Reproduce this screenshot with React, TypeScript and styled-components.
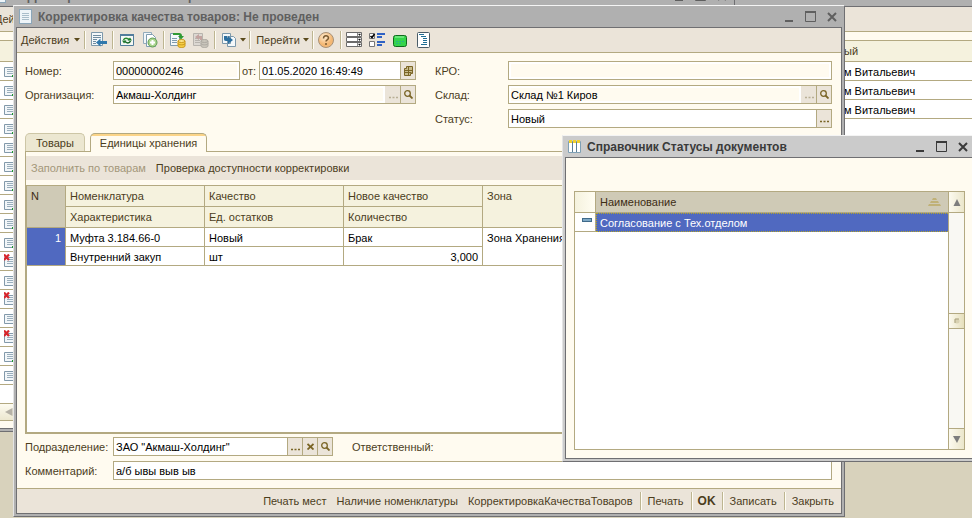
import React from 'react';
import styled, { createGlobalStyle, css } from 'styled-components';

const c = {
  desktop: '#d8d2bc',
  cream: '#fffbf0',
  bar: '#ebe4d9',
  line: '#b3a981',
  head: '#f5f2de',
  headActive: '#cfcab6',
  dark: '#6f6f72',
  text: '#4b3d1c',
  blue: '#5069c0',
  glyph: '#7a6526',
};

const GlobalStyle = createGlobalStyle`
  *, *::before, *::after { box-sizing: border-box; }
  html, body, #root { height: 100%; margin: 0; }
  body { font: 11px/14px "Liberation Sans", Arial, sans-serif; color: ${c.text}; }
  button, input { font: inherit; color: inherit; margin: 0; padding: 0; border: 0; border-radius: 0; background: none; outline: none; }
  svg { display: block; flex: none; }
`;

const Desktop = styled.div`
  position: relative;
  height: 100%;
  overflow: hidden;
  background: ${c.desktop};
`;

/* ---------- windows ---------- */

type Place = { $place: 'back' | 'main' | 'dialog' };
const places = {
  back: css`inset: -16px -13px 86px -13px; background: #b0b0b0; color: #5f5f5f;`,
  main: css`inset: 5px 127px 1px 13px; background: #b0b0b0; color: #5f5f5f;`,
  dialog: css`inset: 135px -4px 56px 562px; background: #cbcbcb; color: #3a3a3a;`,
};

const Frame = styled.section<Place>`
  position: absolute;
  display: flex;
  flex-direction: column;
  border: 1px solid ${c.dark};
  border-top-color: #f4f4f4;
  border-left-color: #e4e4e4;
  ${p => places[p.$place]}
`;

const TitleBar = styled.header`
  display: flex;
  align-items: center;
  flex: none;
  height: 21px;
  padding-left: 5px;
`;

const Title = styled.h1`
  flex: 1;
  margin: 0 0 0 6px;
  font: bold 12px/16px "Liberation Sans", Arial, sans-serif;
  white-space: nowrap;
`;

const Controls = styled.div`
  display: flex;
  padding-right: 2px;
`;

const Control = styled.button`
  display: grid;
  place-items: center;
  width: 21px;
  height: 20px;
`;

const TitleFiller = styled.div`
  width: 250px;
  height: 21px;
  border-left: 1px solid ${c.dark};
`;

const Client = styled.div`
  display: flex;
  flex: 1;
  flex-direction: column;
  min-height: 0;
  margin: 0 2px 2px;
  border: 1px solid ${c.dark};
  background: ${c.cream};
  color: ${c.text};
`;

/* ---------- toolbars ---------- */

const Toolbar = styled.div`
  display: flex;
  align-items: center;
  flex: none;
  height: 25px;
  border-bottom: 1px solid ${c.line};
  background: ${c.bar};
`;

const MenuButton = styled.button<{ $compact?: boolean }>`
  display: flex;
  align-items: center;
  gap: ${p => (p.$compact ? 2 : 4)}px;
  height: 22px;
  padding: 0 ${p => (p.$compact ? 1 : 2)}px 0 4px;
  white-space: nowrap;
`;

const ToolButton = styled.button`
  display: grid;
  place-items: center;
  width: 23px;
  height: 22px;
`;

const Separator = styled.span`
  width: 2px;
  height: 18px;
  margin: 0 1px 0 2px;
  border-left: 1px solid #bdb591;
  border-right: 1px solid #fffdf5;
`;

const FooterBar = styled(Toolbar)`
  justify-content: flex-end;
  padding-right: 2px;
  border-top: 1px solid ${c.line};
  border-bottom: 0;
`;

const CommandBar = styled.div`
  display: flex;
  flex: none;
  align-items: center;
  height: 24px;
  background: ${c.bar};
`;

const TextButton = styled.button<{ $strong?: boolean }>`
  height: 22px;
  padding: 0 ${p => (p.$strong ? 4 : 5)}px;
  white-space: nowrap;
  font-weight: ${p => (p.$strong ? 'bold' : 'normal')};
  font-size: ${p => (p.$strong ? 12 : 11)}px;
  &:disabled { color: #a3977a; }
`;

/* ---------- form ---------- */

const FormBody = styled.form`
  display: flex;
  flex: 1;
  flex-direction: column;
  min-height: 0;
  padding: 8px 9px 8px 8px;
`;

const FieldGrid = styled.div`
  display: grid;
  grid-template-columns: 391px minmax(0, 1fr);
  gap: 5px 19px;
`;

const FieldRow = styled.div<{ $side?: 'right' }>`
  display: flex;
  align-items: center;
  flex: none;
  height: 19px;
  ${p => p.$side && css`grid-column: 2;`}
`;

const Label = styled.label<{ $size: 'left' | 'right' | 'fit' }>`
  flex: none;
  width: ${p => ({ left: '88px', right: '73px', fit: 'auto' })[p.$size]};
  padding: ${p => (p.$size === 'fit' ? '0 3px 0 2px' : '0')};
`;

const FieldBox = styled.div<{ $size?: 'short' | 'medium' }>`
  display: flex;
  flex: ${p => (p.$size ? 'none' : '1')};
  width: ${p => (p.$size === 'short' ? '127px' : p.$size === 'medium' ? '220px' : 'auto')};
  min-width: 0;
  height: 19px;
  border: 1px solid ${c.line};
  background: #fff;
`;

const TextBox = styled.input`
  flex: 1;
  min-width: 0;
  height: 17px;
  padding: 0 2px;
  color: #000;
  &:read-only {
    background: ${c.cream};
    box-shadow: inset 0 0 0 2px #fff;
  }
`;

const FieldButton = styled.button<{ $flat?: boolean }>`
  display: grid;
  place-items: center;
  flex: none;
  width: 15px;
  border-left: 1px solid ${p => (p.$flat ? c.bar : c.line)};
  background: ${c.bar};
  color: ${c.glyph};
  &:disabled { color: #b9af96; }
`;

/* ---------- tabs and grid ---------- */

const Tabs = styled.div`
  display: flex;
  align-items: flex-start;
  flex: none;
  gap: 5px;
  height: 19px;
  margin-top: 5px;
  box-shadow: inset 0 -1px ${c.line};
`;

const Tab = styled.button`
  height: 18px;
  padding: 1px 10px 0;
  border: 1px solid #cdc6a6;
  border-bottom: 0;
  border-radius: 5px 5px 0 0;
  background: #ece7d1;
  &[aria-selected='true'] {
    height: 19px;
    padding: 0 9px;
    border-color: ${c.line};
    background: linear-gradient(#fbd489 0 2px, ${c.cream} 2px);
  }
`;

const Panel = styled.div`
  display: flex;
  flex: 1;
  flex-direction: column;
  gap: 5px;
  min-height: 0;
  padding-top: 4px;
  box-shadow: inset 1px 0 ${c.line}, inset -1px 0 ${c.line};
  & > ${CommandBar} { margin: 0 1px; }
`;

const GridFrame = styled.div`
  flex: 1;
  min-height: 0;
  overflow: hidden;
  border: 2px solid ${c.line};
  border-top-width: 1px;
  background: #fff;
`;

const Grid = styled.table`
  width: 100%;
  table-layout: fixed;
  border-spacing: 0;
  th, td {
    overflow: hidden;
    padding: 0 4px;
    border-right: 1px solid ${c.line};
    border-bottom: 1px solid ${c.line};
    text-align: left;
    font-weight: normal;
    white-space: nowrap;
  }
  th:last-child, td:last-child { border-right: 0; }
  th { height: 21px; background: ${c.head}; }
  td { height: 19px; padding-top: 2px; background: #fff; color: #000; }
  [rowspan] { vertical-align: top; padding-top: 3px; }
  .inner { border-right: 1px solid ${c.line}; }
`;

const Col = styled.col<{ $w?: number }>`
  width: ${p => (p.$w ? `${p.$w}px` : 'auto')};
`;

const ActiveHead = styled.th`
  && { background: ${c.headActive}; color: #3d2c14; }
`;

const RowNumber = styled.td`
  && { background: ${c.blue}; color: #fff; text-align: right; }
`;

const InnerHead = styled.th`
  &&&:last-child { border-right: 1px solid ${c.line}; }
`;

const NumberCell = styled.td`
  &&&:last-child { border-right: 1px solid ${c.line}; text-align: right; }
`;

const Bottom = styled.div`
  display: flex;
  flex: none;
  flex-direction: column;
  gap: 5px;
  margin-top: 3px;
`;

const Responsible = styled.span`
  margin-left: 19px;
`;

/* ---------- dialog list ---------- */

const ListFrame = styled.div`
  display: flex;
  flex: 1;
  min-height: 0;
  margin: 33px 7px 8px 8px;
  border: 1px solid ${c.line};
  background: #fff;
`;

const ListArea = styled.div`
  flex: 1;
  min-width: 0;
`;

const ListHead = styled.div`
  display: flex;
  align-items: center;
  justify-content: space-between;
  padding-right: 3px;
`;

const MarkerHead = styled.th`
  && { background: linear-gradient(90deg, ${c.head}, #fffdf2); }
`;

const MarkerCell = styled.td`
  && { padding: 0 0 4px 7px; }
`;

const SelectedCell = styled.td`
  && {
    padding: 0 3px;
    border: 1px dotted #b5a628;
    background: ${c.blue};
    color: #fff;
  }
`;

const ScrollBar = styled.div`
  display: flex;
  flex: none;
  flex-direction: column;
  width: 16px;
  border-left: 1px solid ${c.line};
  background: #f9f8f3;
`;

const ScrollButton = styled.button`
  display: grid;
  place-items: center;
  flex: none;
  height: 21px;
  background: linear-gradient(90deg, #fcfaef, #ebe6cb);
  &:first-child { border-bottom: 1px solid ${c.line}; }
  &:last-child { border-top: 1px solid ${c.line}; }
`;

const Track = styled.div`
  display: flex;
  flex-direction: column;
  justify-content: center;
  flex: 1;
`;

const Thumb = styled.div`
  display: grid;
  place-items: center;
  height: 16px;
  border: solid ${c.line};
  border-width: 1px 0;
  background: linear-gradient(90deg, #fcfaef, #e6dfbb);
`;

/* ---------- back window ---------- */

const Journal = styled.div`
  display: flex;
  flex: 1;
  flex-direction: column;
  min-height: 0;
  margin: 8px 0 7px;
  border: solid ${c.line};
  border-width: 1px 0;
  background: #fff;
`;

const JournalGrid = styled(Grid)`
  && td, && th { border-right: 0; padding-left: 0; }
  && td:first-child { padding: 0 0 0 13px; }
`;

const HScroll = styled.div`
  flex: none;
  height: 17px;
  margin-top: auto;
  padding: 4px 0 0 14px;
  border-top: 1px solid ${c.line};
  background: linear-gradient(#fdfbf0, #ece7cf);
`;

/* ---------- drawings ---------- */

const Arrow = () => (
  <svg width="7" height="4" viewBox="0 0 7 4"><path d="M1 0h6L4 3.500z" fill="#5a4a1c" /></svg>
);

const PageIcon = () => (
  <svg width="13" height="15" viewBox="0 0 13 15">
    <rect x=".5" y=".5" width="12" height="14" fill="#eef4f8" stroke="#8ba6b9" />
    <path d="M3 4.500h7M3 6.500h7M3 8.500h7M3 10.500h7" stroke="#a9bdca" />
  </svg>
);

const BookIcon = () => (
  <svg width="13" height="13" viewBox="0 0 13 13">
    <path d="M.5 1.500h12v11H.5z" fill="#fff" stroke="#7fa0b5" />
    <path d="M4.500 2v10M8.500 2v10" stroke="#5c7e96" />
    <path d="M1 1.500h3M5 1.500h3M9 1.500h3" stroke="#efd02e" strokeWidth="3" />
  </svg>
);

const MinIcon = () => (
  <svg width="12" height="12" viewBox="0 0 12 12"><path d="M1 10h8" stroke="currentColor" strokeWidth="2" /></svg>
);
const MaxIcon = () => (
  <svg width="12" height="12" viewBox="0 0 12 12">
    <path d="M.5.500h10v10h-10z" fill="none" stroke="currentColor" /><path d="M0 1h11" stroke="currentColor" strokeWidth="2" />
  </svg>
);
const CloseIcon = () => (
  <svg width="12" height="12" viewBox="0 0 12 12"><path d="M2 2l8 8M10 2l-8 8" stroke="currentColor" strokeWidth="2" /></svg>
);

const GoToListIcon = () => (
  <svg width="16" height="16" viewBox="0 0 16 16">
    <path d="M.5.500h11v13H.5z" fill="#f4f8fa" stroke="#7c98ab" />
    <path d="M2 3.500h8M2 5.500h8M2 7.500h4M2 9.500h3M2 11.500h3" stroke="#6f8ca0" />
    <path d="M5 10.500l4.500-4v2.500H16v3H9.500v2.500z" fill="#2f78ac" />
  </svg>
);

const RefreshIcon = () => (
  <svg width="16" height="16" viewBox="0 0 16 16">
    <path d="M1.500 2.500h13v11h-13z" fill="#f4f8f4" stroke="#527d9c" />
    <path d="M1 3h14" stroke="#527d9c" strokeWidth="2" />
    <path d="M4.500 8c1-2.500 4-2.500 6 0" fill="none" stroke="#2a8a32" strokeWidth="1.500" />
    <path d="M11.500 9c-1 2.500-4 2.500-6 0" fill="none" stroke="#17692a" strokeWidth="1.500" />
    <path d="M8.500 8.500H13l-2-3zM7.500 8.500H3l2 3z" fill="#1f7a2c" />
  </svg>
);

const CopyIcon = () => (
  <svg width="16" height="16" viewBox="0 0 16 16">
    <path d="M1.500.500h8v11h-8z" fill="#f2f6f9" stroke="#92abbc" />
    <path d="M4.500 2.500h6l3 3v9h-9z" fill="#fff" stroke="#7e9bb0" />
    <circle cx="10.500" cy="10.500" r="4.500" fill="#a9d48d" stroke="#5f9c52" />
    <path d="M8 10.500h5M10.500 8v5" stroke="#fff" strokeWidth="2" />
  </svg>
);

const PostIcon = ({ off }: { off?: boolean }) => {
  const edge = off ? '#b8b4ae' : '#7e9bb0';
  const coin = off ? '#c9c5bb' : '#f6cf45';
  const rim = off ? '#aeaaa2' : '#c9971b';
  return (
    <svg width="16" height="16" viewBox="0 0 16 16">
      <path d="M.5 1.500h9v12h-9z" fill={off ? '#dcd8d2' : '#f4f8fa'} stroke={edge} />
      <path d="M2 6.500h5M2 8.500h5M2 10.500h5" stroke={edge} />
      <path d="M8 9v5c0 2 7 2 7 0V9" fill={coin} stroke={rim} />
      <ellipse cx="11.500" cy="9" rx="3.500" ry="1.500" fill={off ? coin : '#fde58a'} stroke={rim} />
      <path d="M8 11.500c0 1.800 7 1.800 7 0" fill="none" stroke={rim} />
      {off
        ? <path d="M9 8V4H6V2L2 5l4 3V6h1v2z" fill="#c3a3a0" />
        : <path d="M3 3V1h6c2 0 3 1 3 3h2l-3 3.500L8 4h2c0-1-1-1-2-1z" fill="#2f9a33" />}
    </svg>
  );
};

const BasedOnIcon = () => (
  <svg width="16" height="16" viewBox="0 0 16 16">
    <path d="M1.500 1.500h8v10h-8zM6.500 4.500h6l2 2v8h-8z" fill="#f4f8fa" stroke="#7c98ab" />
    <path d="M3 4v3c0 2 1 2 4 2v3l5-4-5-4v2H6V4z" fill="#2d6f9f" />
  </svg>
);

const HelpIcon = () => (
  <svg width="16" height="16" viewBox="0 0 16 16">
    <defs><radialGradient id="helpFill" cx=".4" cy=".3"><stop offset="0" stopColor="#ffecd0" /><stop offset="1" stopColor="#f4b874" /></radialGradient></defs>
    <circle cx="8" cy="8" r="7.500" fill="url(#helpFill)" stroke="#a89177" />
    <path d="M5.500 6.500c0-3.500 5-3.500 5-.5 0 1.800-2.500 1.800-2.500 3.500M8 11v2" fill="none" stroke="#7a5a30" strokeWidth="1.500" />
  </svg>
);

const RowsIcon = () => (
  <svg width="16" height="16" viewBox="0 0 16 16">
    <path d="M.5.500h15v4H.5zM.5 5.500h15v4H.5zM.5 10.500h15v4H.5z" fill="#fff" stroke="#6b6b6b" />
    <path d="M11.500 1v3M11.500 6v3M11.500 11v3" stroke="#8a8a8a" />
    <path d="M12.500 2h2l-1 1.500zM12.500 7h2l-1 1.500zM12.500 12h2l-1 1.500z" fill="#111" stroke="#111" strokeWidth=".5" />
  </svg>
);

const ChecksIcon = () => (
  <svg width="17" height="16" viewBox="0 0 17 16">
    <path d="M.5 1.500h5v5h-5zM.5 9.500h5v5h-5z" fill="#fff" stroke="#777" />
    <path d="M1.500 4l1.500 1.500L5.500 2" fill="none" stroke="#000" strokeWidth="1.500" />
    <path d="M8 2h8M8 5h5M8 10h8M8 13h5" stroke="#2f62c4" strokeWidth="2" />
  </svg>
);

const GreenIcon = () => (
  <svg width="16" height="16" viewBox="0 0 16 16">
    <rect x="1.500" y="3.500" width="13" height="11" rx="2" fill="#35d54b" stroke="#0f6a1c" />
    <path d="M3 5h9" stroke="#9cf5a4" /><path d="M4 9.500h8M4 11.500h6" stroke="#27b487" strokeDasharray="2 1" />
  </svg>
);

const OutlineIcon = () => (
  <svg width="16" height="16" viewBox="0 0 16 16">
    <rect x="2.500" y=".5" width="12" height="15" rx="1" fill="#fff" stroke="#4b5d68" />
    <path d="M4 2.500h5M6 4.500h5M8 6.500h4M8 8.500h4M8 10.500h4M6 12.500h6" stroke="#1f6f95" />
  </svg>
);

const CalendarIcon = () => (
  <svg width="9" height="10" viewBox="0 0 9 10">
    <path d="M2.500.500h6v7h-2v2h-6v-7h2z" fill="#c9bc8c" stroke={c.glyph} />
    <path d="M.5 4.500h8M.5 6.500h7M4.500 1v8" stroke={c.glyph} />
  </svg>
);

const SearchIcon = () => (
  <svg width="9" height="9" viewBox="0 0 9 9">
    <circle cx="3.500" cy="3.500" r="2.800" fill="none" stroke={c.glyph} strokeWidth="1.300" />
    <path d="M5.500 5.500L8.500 8.500" stroke={c.glyph} strokeWidth="1.800" />
  </svg>
);

const DotsIcon = () => (
  <svg width="9" height="9" viewBox="0 0 9 9"><path d="M0 7.500h2M3.500 7.500h2M7 7.500h2" stroke="currentColor" strokeWidth="1.500" /></svg>
);

const ClearIcon = () => (
  <svg width="7" height="7" viewBox="0 0 7 7"><path d="M.5 1l6 5.500M6.500 1l-6 5.500" stroke={c.glyph} strokeWidth="1.800" /></svg>
);

const SortIcon = () => (
  <svg width="13" height="9" viewBox="0 0 13 9">
    <path d="M5 0h3l1 2H4zM3 3h7l1 2H2zM1 6h11l1 2H0z" fill="#c0b177" />
  </svg>
);

const ItemIcon = () => (
  <svg width="10" height="4" viewBox="0 0 10 4"><rect x=".5" y=".5" width="9" height="3" fill="#7fa9c6" stroke="#3f6a8a" /></svg>
);

const Triangle = ({ dir }: { dir: 'up' | 'down' | 'left' }) => (
  <svg width="8" height="8" viewBox="0 0 8 8">
    <path d={{ up: 'M4 1l3.500 7h-7z', down: 'M0 1h7.500L4 8z', left: 'M7.500 0v8L0 4z' }[dir]} fill={dir === 'left' ? '#b5b1a6' : '#7d7d7d'} />
  </svg>
);

const ThumbDot = () => (
  <svg width="6" height="6" viewBox="0 0 6 6"><circle cx="3" cy="3" r="2.500" fill="#d9d2b2" /><path d="M1 5V1h4" fill="none" stroke="#aaa27e" /></svg>
);

const DocIcon = ({ kind }: { kind: string }) => (
  <svg width="12" height="15" viewBox="0 0 12 15">
    <path d="M.5 3.500H12v9H.5z" fill="#f2f6f9" stroke="#8299aa" />
    <path d="M3 5.500h8M3 7.500h8M3 9.500h8" stroke="#9aaebc" />
    {kind === 'posted' && <path d="M8 12h4" stroke="#1b9a2c" strokeWidth="2" />}
    {kind === 'deleted' && <path d="M0 .500l5 5.500M5 .500l-5 5.500" stroke="#d8262c" strokeWidth="2.200" />}
  </svg>
);

/* ---------- parts ---------- */

const WindowControls = () => (
  <Controls>
    <Control aria-label="Свернуть"><MinIcon /></Control>
    <Control aria-label="Развернуть"><MaxIcon /></Control>
    <Control aria-label="Закрыть окно"><CloseIcon /></Control>
  </Controls>
);

const journalRows = [
  ...Array<string>(10).fill('posted'),
  'deleted', 'saved', 'deleted', 'saved', 'deleted', 'posted', 'saved',
];

const JournalWindow = () => (
  <Frame $place="back">
    <TitleBar>
      <PageIcon />
      <Title>Корректировка качества товаров</Title>
      <WindowControls />
      <TitleFiller />
    </TitleBar>
    <Client>
      <Toolbar><MenuButton>Действия</MenuButton></Toolbar>
      <Journal>
        <JournalGrid>
          <colgroup><Col /><Col $w={137} /></colgroup>
          <thead><tr><th /><th>ый</th></tr></thead>
          <tbody>
            {journalRows.map((kind, i) => (
              <tr key={i}>
                <td><DocIcon kind={kind} /></td>
                <td>{i < 3 ? 'м Витальевич' : ''}</td>
              </tr>
            ))}
          </tbody>
        </JournalGrid>
        <HScroll><Triangle dir="left" /></HScroll>
      </Journal>
    </Client>
  </Frame>
);

const MainToolbar = () => (
  <Toolbar role="toolbar">
    <MenuButton>Действия<Arrow /></MenuButton>
    <Separator />
    <ToolButton aria-label="Найти в списке"><GoToListIcon /></ToolButton>
    <Separator />
    <ToolButton aria-label="Перечитать"><RefreshIcon /></ToolButton>
    <ToolButton aria-label="Скопировать"><CopyIcon /></ToolButton>
    <Separator />
    <ToolButton aria-label="Провести"><PostIcon /></ToolButton>
    <ToolButton aria-label="Отмена проведения" disabled><PostIcon off /></ToolButton>
    <Separator />
    <MenuButton $compact aria-label="Ввести на основании"><BasedOnIcon /><Arrow /></MenuButton>
    <Separator />
    <MenuButton $compact>Перейти<Arrow /></MenuButton>
    <Separator />
    <ToolButton aria-label="Справка"><HelpIcon /></ToolButton>
    <Separator />
    <ToolButton aria-label="Строки"><RowsIcon /></ToolButton>
    <ToolButton aria-label="Флажки"><ChecksIcon /></ToolButton>
    <ToolButton aria-label="Сообщение"><GreenIcon /></ToolButton>
    <ToolButton aria-label="Структура"><OutlineIcon /></ToolButton>
  </Toolbar>
);

const HeaderFields = () => (
  <FieldGrid>
    <FieldRow>
      <Label $size="left" htmlFor="number">Номер:</Label>
      <FieldBox $size="short"><TextBox id="number" readOnly defaultValue="00000000246" /></FieldBox>
      <Label $size="fit" htmlFor="date">от:</Label>
      <FieldBox>
        <TextBox id="date" defaultValue="01.05.2020 16:49:49" />
        <FieldButton type="button" aria-label="Календарь"><CalendarIcon /></FieldButton>
      </FieldBox>
    </FieldRow>
    <FieldRow $side="right">
      <Label $size="right" htmlFor="kro">КРО:</Label>
      <FieldBox><TextBox id="kro" readOnly /></FieldBox>
    </FieldRow>
    <FieldRow>
      <Label $size="left" htmlFor="org">Организация:</Label>
      <FieldBox>
        <TextBox id="org" readOnly defaultValue="Акмаш-Холдинг" />
        <FieldButton type="button" $flat disabled aria-label="Выбрать организацию"><DotsIcon /></FieldButton>
        <FieldButton type="button" aria-label="Открыть организацию"><SearchIcon /></FieldButton>
      </FieldBox>
    </FieldRow>
    <FieldRow $side="right">
      <Label $size="right" htmlFor="store">Склад:</Label>
      <FieldBox>
        <TextBox id="store" readOnly defaultValue="Склад №1 Киров" />
        <FieldButton type="button" $flat disabled aria-label="Выбрать склад"><DotsIcon /></FieldButton>
        <FieldButton type="button" aria-label="Открыть склад"><SearchIcon /></FieldButton>
      </FieldBox>
    </FieldRow>
    <FieldRow $side="right">
      <Label $size="right" htmlFor="status">Статус:</Label>
      <FieldBox>
        <TextBox id="status" defaultValue="Новый" />
        <FieldButton type="button" aria-label="Выбрать статус"><DotsIcon /></FieldButton>
      </FieldBox>
    </FieldRow>
  </FieldGrid>
);

const UnitsGrid = () => (
  <GridFrame>
    <Grid>
      <colgroup><Col $w={39} /><Col $w={139} /><Col $w={139} /><Col $w={139} /><Col /></colgroup>
      <thead>
        <tr>
          <ActiveHead rowSpan={2}>N</ActiveHead>
          <th>Номенклатура</th><th>Качество</th><th>Новое качество</th>
          <th rowSpan={2}>Зона</th>
        </tr>
        <tr><th>Характеристика</th><th>Ед. остатков</th><InnerHead>Количество</InnerHead></tr>
      </thead>
      <tbody>
        <tr>
          <RowNumber rowSpan={2}>1</RowNumber>
          <td>Муфта 3.184.66-0</td><td>Новый</td><td>Брак</td>
          <td rowSpan={2}>Зона Хранения</td>
        </tr>
        <tr><td>Внутренний закуп</td><td>шт</td><NumberCell>3,000</NumberCell></tr>
      </tbody>
    </Grid>
  </GridFrame>
);

const DocumentWindow = () => (
  <Frame $place="main">
    <TitleBar>
      <PageIcon />
      <Title>Корректировка качества товаров: Не проведен</Title>
      <WindowControls />
    </TitleBar>
    <Client>
      <MainToolbar />
      <FormBody>
        <HeaderFields />
        <Tabs role="tablist">
          <Tab type="button" role="tab" aria-selected="false">Товары</Tab>
          <Tab type="button" role="tab" aria-selected="true">Единицы хранения</Tab>
        </Tabs>
        <Panel role="tabpanel">
          <CommandBar>
            <TextButton type="button" disabled>Заполнить по товарам</TextButton>
            <TextButton type="button">Проверка доступности корректировки</TextButton>
          </CommandBar>
          <UnitsGrid />
        </Panel>
        <Bottom>
          <FieldRow>
            <Label $size="left" htmlFor="dept">Подразделение:</Label>
            <FieldBox $size="medium">
              <TextBox id="dept" defaultValue={'ЗАО "Акмаш-Холдинг"'} />
              <FieldButton type="button" aria-label="Выбрать подразделение"><DotsIcon /></FieldButton>
              <FieldButton type="button" aria-label="Очистить"><ClearIcon /></FieldButton>
              <FieldButton type="button" aria-label="Открыть подразделение"><SearchIcon /></FieldButton>
            </FieldBox>
            <Responsible>Ответственный:</Responsible>
          </FieldRow>
          <FieldRow>
            <Label $size="left" htmlFor="comment">Комментарий:</Label>
            <FieldBox><TextBox id="comment" defaultValue="а/б ывы выв ыв" /></FieldBox>
          </FieldRow>
        </Bottom>
      </FormBody>
      <FooterBar>
        <TextButton>Печать мест</TextButton>
        <TextButton>Наличие номенклатуры</TextButton>
        <TextButton>КорректировкаКачестваТоваров</TextButton>
        <Separator />
        <TextButton>Печать</TextButton>
        <Separator />
        <TextButton $strong>OK</TextButton>
        <Separator />
        <TextButton>Записать</TextButton>
        <Separator />
        <TextButton>Закрыть</TextButton>
      </FooterBar>
    </Client>
  </Frame>
);

const StatusDialog = () => (
  <Frame $place="dialog" role="dialog">
    <TitleBar>
      <BookIcon />
      <Title>Справочник Статусы документов</Title>
      <WindowControls />
    </TitleBar>
    <Client>
      <ListFrame>
        <ListArea>
          <Grid>
            <colgroup><Col $w={21} /><Col /></colgroup>
            <thead>
              <tr>
                <MarkerHead />
                <ActiveHead><ListHead>Наименование<SortIcon /></ListHead></ActiveHead>
              </tr>
            </thead>
            <tbody>
              <tr>
                <MarkerCell><ItemIcon /></MarkerCell>
                <SelectedCell>Согласование с Тех.отделом</SelectedCell>
              </tr>
            </tbody>
          </Grid>
        </ListArea>
        <ScrollBar>
          <ScrollButton aria-label="Вверх"><Triangle dir="up" /></ScrollButton>
          <Track><Thumb><ThumbDot /></Thumb></Track>
          <ScrollButton aria-label="Вниз"><Triangle dir="down" /></ScrollButton>
        </ScrollBar>
      </ListFrame>
    </Client>
  </Frame>
);

export default function App() {
  return (
    <>
      <GlobalStyle />
      <Desktop>
        <JournalWindow />
        <DocumentWindow />
        <StatusDialog />
      </Desktop>
    </>
  );
}
